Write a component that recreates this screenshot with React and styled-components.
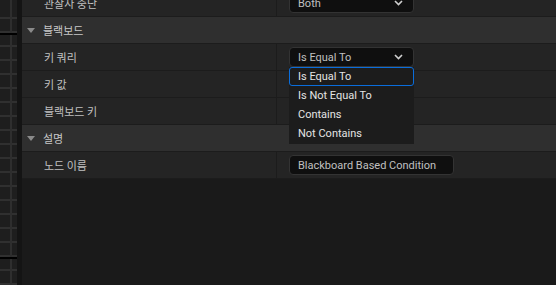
import React from 'react';
import styled, { createGlobalStyle } from 'styled-components';

const Global = createGlobalStyle`
  html, body { margin: 0; padding: 0; background: #1a1a1a; }
  body { font-family: Roboto, "Noto Sans CJK KR", sans-serif; }
`;

const Frame = styled.div`
  display: flex;
  width: 556px;
  height: 285px;
  overflow: hidden;
`;

// graph canvas peeking in from the left
const GraphStrip = styled.div`
  width: 17px;
  flex: none;
  background-color: #1e1e1e;
  background-image:
    linear-gradient(#000, #000),
    linear-gradient(#000, #000),
    linear-gradient(90deg, transparent 10px, #2e2e2e 10px, #2e2e2e 12px, transparent 12px),
    repeating-linear-gradient(180deg, transparent 0 12px, #303030 12px 14px);
  background-size: 100% 2px, 100% 2px, 100% 100%, 100% 100%;
  background-position: 0 33px, 0 257px, 0 0, 0 5px;
  background-repeat: no-repeat, no-repeat, no-repeat, repeat;
`;

const Gutter = styled.div`
  width: 5px;
  flex: none;
  background: #141414;
`;

const Panel = styled.div`
  flex: 1;
  background: #1a1a1a;
  display: flex;
  flex-direction: column;
  margin-top: -10px;
`;

const Category = styled.div`
  height: 26px;
  display: flex;
  align-items: center;
  background: #2f2f2f;
  border-bottom: 1px solid #1c1c1c;
  color: #c8c8c8;
  font-family: "Noto Sans CJK KR", sans-serif;
  font-size: 11px;
`;

const Arrow = styled.span`
  width: 0;
  height: 0;
  margin: 0 8px 0 5px;
  border-left: 4.5px solid transparent;
  border-right: 4.5px solid transparent;
  border-top: 5px solid #8a8a8a;
`;

const Row = styled.div`
  height: 26px;
  display: flex;
  background: #242424;
  border-bottom: 1px solid #1c1c1c;
`;

const Name = styled.div`
  width: 255px;
  flex: none;
  display: flex;
  align-items: center;
  padding-left: 22px;
  box-sizing: border-box;
  border-right: 1px solid #1c1c1c;
  color: #c0c0c0;
  font-family: "Noto Sans CJK KR", sans-serif;
  font-size: 11px;
`;

const Value = styled.div`
  flex: 1;
  display: flex;
  align-items: center;
  padding-left: 12px;
  position: relative;
`;

const Field = styled.div`
  width: ${(p) => p.w}px;
  height: 20px;
  box-sizing: border-box;
  display: flex;
  align-items: center;
  justify-content: space-between;
  padding: 0 10px 0 8px;
  background: #0f0f0f;
  border: 1px solid #333;
  border-radius: 4px;
  color: #c0c0c0;
  font-family: Roboto, sans-serif;
  font-size: 11px;
`;

const Menu = styled.div`
  position: absolute;
  left: 12px;
  top: 23px;
  width: 125px;
  background: #1c1c1c;
  z-index: 2;
  padding-bottom: 1px;
`;

const Item = styled.div`
  height: 19px;
  box-sizing: border-box;
  display: flex;
  align-items: center;
  padding-left: 8px;
  color: #e4e4e4;
  font-family: Roboto, sans-serif;
  font-size: 11px;
  border: 1px solid ${(p) => (p.selected ? '#0a6ddb' : 'transparent')};
  border-radius: 3px;
`;

const Empty = styled.div`
  flex: 1;
  background: #1a1a1a;
`;

const Chevron = () => (
  <svg width="9" height="6" viewBox="0 0 9 6">
    <path d="M1 1 L4.5 4.5 L8 1" fill="none" stroke="#d0d0d0" strokeWidth="1.6" />
  </svg>
);

const options = ['Is Equal To', 'Is Not Equal To', 'Contains', 'Not Contains'];

export default function App() {
  return (
    <Frame>
      <Global />
      <GraphStrip />
      <Gutter />
      <Panel>
        <Row>
          <Name>관찰자 중단</Name>
          <Value>
            <Field w={125}>
              Both
              <Chevron />
            </Field>
          </Value>
        </Row>
        <Category>
          <Arrow />
          블랙보드
        </Category>
        <Row>
          <Name>키 쿼리</Name>
          <Value>
            <Field w={125}>
              Is Equal To
              <Chevron />
            </Field>
            <Menu>
              {options.map((o, i) => (
                <Item key={o} selected={i === 0}>
                  {o}
                </Item>
              ))}
            </Menu>
          </Value>
        </Row>
        <Row>
          <Name>키 값</Name>
          <Value />
        </Row>
        <Row>
          <Name>블랙보드 키</Name>
          <Value />
        </Row>
        <Category>
          <Arrow />
          설명
        </Category>
        <Row>
          <Name>노드 이름</Name>
          <Value>
            <Field w={165}>Blackboard Based Condition</Field>
          </Value>
        </Row>
        <Empty />
      </Panel>
    </Frame>
  );
}
